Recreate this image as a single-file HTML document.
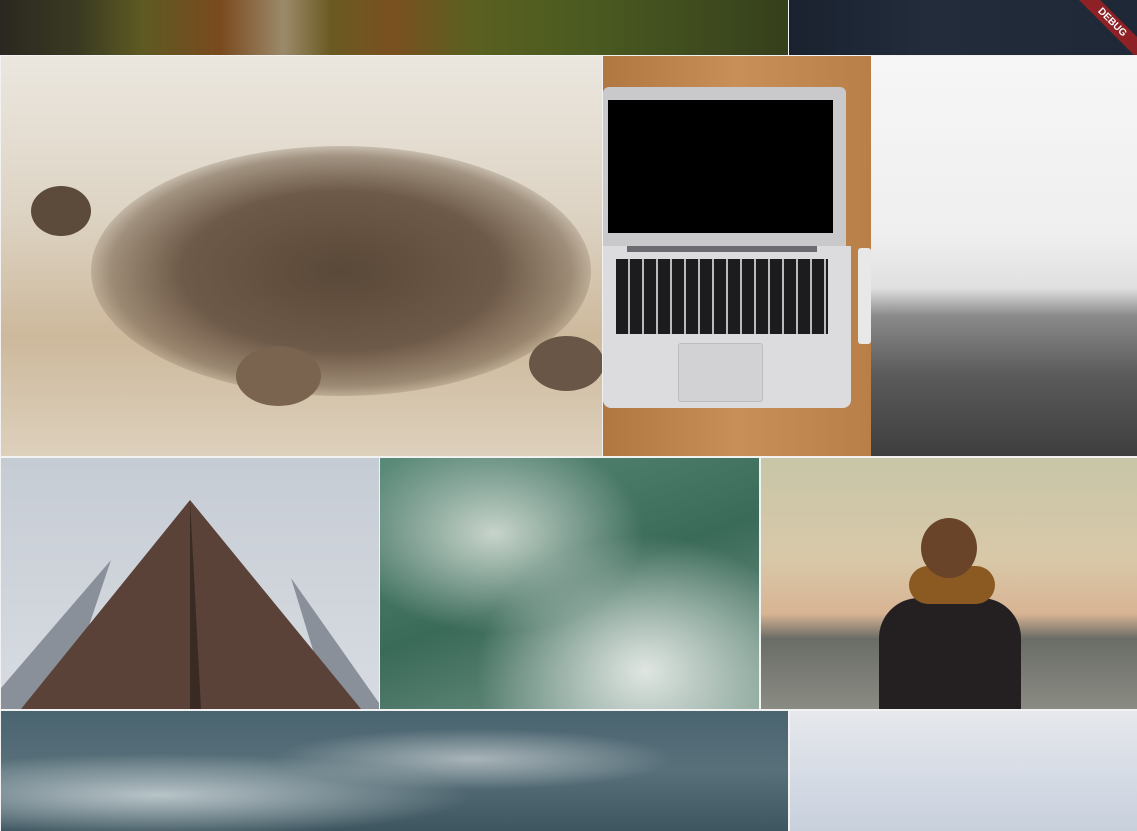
<!DOCTYPE html>
<html><head><style>
html,body{margin:0;padding:0;width:1137px;height:831px;overflow:hidden;background:#f2f2f2;position:relative;font-family:"Liberation Sans",sans-serif}
.t{position:absolute;overflow:hidden}
</style></head><body>
<div class="t" style="left:0;top:0;width:788px;height:55px;background:linear-gradient(90deg,#2a2820 0%,#3a3a22 10%,#5e5a22 18%,#7a4a1e 28%,#9b8a6a 36%,#6a5a22 42%,#7a5020 50%,#5a6020 60%,#4a5a20 75%,#3e4a1e 90%,#35401c 100%)"></div>
<div class="t" style="left:789px;top:0;width:348px;height:55px;background:linear-gradient(90deg,#1a2230,#222c3a 40%,#1f2836)"></div>
<div class="t" style="left:1060px;top:0;width:77px;height:55px">
 <div style="position:absolute;left:7px;top:15px;width:90px;height:15px;background:#8e2126;transform:rotate(45deg);color:#fff;font-size:10px;font-weight:bold;text-align:center;line-height:15px">DEBUG</div>
</div>
<div class="t" style="left:1px;top:56px;width:601px;height:400px;background:linear-gradient(180deg,#ebe7df 0%,#ddd3c3 40%,#cdb99c 70%,#ddd0bc 100%)">
 <div style="position:absolute;left:90px;top:90px;width:500px;height:250px;border-radius:50%;background:radial-gradient(ellipse,#5a4838 0%,#6e5a48 45%,rgba(120,100,80,.6) 65%,rgba(200,185,165,0) 75%)"></div>
 <div style="position:absolute;left:30px;top:130px;width:60px;height:50px;border-radius:50%;background:#5c4a3a"></div>
 <div style="position:absolute;left:235px;top:290px;width:85px;height:60px;border-radius:50%;background:#7a6450"></div>
 <div style="position:absolute;left:528px;top:280px;width:75px;height:55px;border-radius:50%;background:#6a5646"></div>
</div>
<div class="t" style="left:603px;top:56px;width:268px;height:400px;background:linear-gradient(90deg,#b07840,#c89058 50%,#b88048)">
 <div style="position:absolute;left:0;top:31px;width:243px;height:160px;background:#c9c9cb;border-radius:6px 6px 0 0"></div>
 <div style="position:absolute;left:5px;top:44px;width:225px;height:133px;background:#000"></div>
 <div style="position:absolute;left:0;top:190px;width:248px;height:162px;background:#dcdcde;border-radius:0 0 8px 8px"></div>
 <div style="position:absolute;left:24px;top:190px;width:190px;height:6px;background:#6a6a70"></div>
 <div style="position:absolute;left:13px;top:203px;width:212px;height:75px;background:repeating-linear-gradient(90deg,#1c1c1e 0 12px,#bbb 12px 14px)"></div>
 <div style="position:absolute;left:75px;top:287px;width:83px;height:57px;background:#d2d2d4;border:1px solid #bdbdbf;border-radius:3px"></div>
 <div style="position:absolute;left:255px;top:192px;width:13px;height:96px;background:#e8e8e8;border-radius:3px"></div>
</div>
<div class="t" style="left:871px;top:56px;width:266px;height:400px;background:linear-gradient(180deg,#f6f6f6 0%,#efefef 45%,#e0e0e0 58%,#8a8a8a 65%,#5a5a5a 80%,#3e3e3e 100%)"></div>
<div class="t" style="left:1px;top:458px;width:378px;height:251px;background:linear-gradient(180deg,#c6ccd4,#d8dce2)">
 <svg width="378" height="251" style="position:absolute;left:0;top:0">
  <polygon points="0,230 110,102 60,251 0,251" fill="#8a909a"/>
  <polygon points="290,120 378,245 378,251 330,251" fill="#8a909a"/>
  <polygon points="189,42 20,251 360,251" fill="#5a4238"/>
  <polygon points="189,42 189,251 200,251" fill="#3a2a24"/>
 </svg>
</div>
<div class="t" style="left:380px;top:458px;width:379px;height:251px;background:radial-gradient(ellipse at 30% 30%,#c8d4cc,transparent 40%),radial-gradient(ellipse at 70% 85%,#e0e6e2,transparent 45%),linear-gradient(160deg,#5a8a78,#3a6a58 50%,#7a9a8c)"></div>
<div class="t" style="left:761px;top:458px;width:376px;height:251px;background:linear-gradient(180deg,#c8c6a8 0%,#d8c8a8 40%,#d8b494 62%,#6a6c66 72%,#8a8c84 100%)">
 <div style="position:absolute;left:118px;top:140px;width:142px;height:111px;background:#242022;border-radius:40px 40px 0 0"></div>
 <div style="position:absolute;left:148px;top:108px;width:86px;height:38px;background:#8a5a22;border-radius:20px"></div>
 <div style="position:absolute;left:160px;top:60px;width:56px;height:60px;background:#6a4428;border-radius:50%"></div>
</div>
<div class="t" style="left:1px;top:711px;width:787px;height:120px;background:radial-gradient(ellipse at 20% 70%,#b8c4c8,transparent 35%),radial-gradient(ellipse at 60% 40%,#a8b4b8,transparent 30%),linear-gradient(180deg,#4a6470,#58707a 50%,#3e5660)"></div>
<div class="t" style="left:790px;top:711px;width:347px;height:120px;background:linear-gradient(180deg,#e6e8ec,#d4dae4 60%,#c8d0dc)"></div>
</body></html>
